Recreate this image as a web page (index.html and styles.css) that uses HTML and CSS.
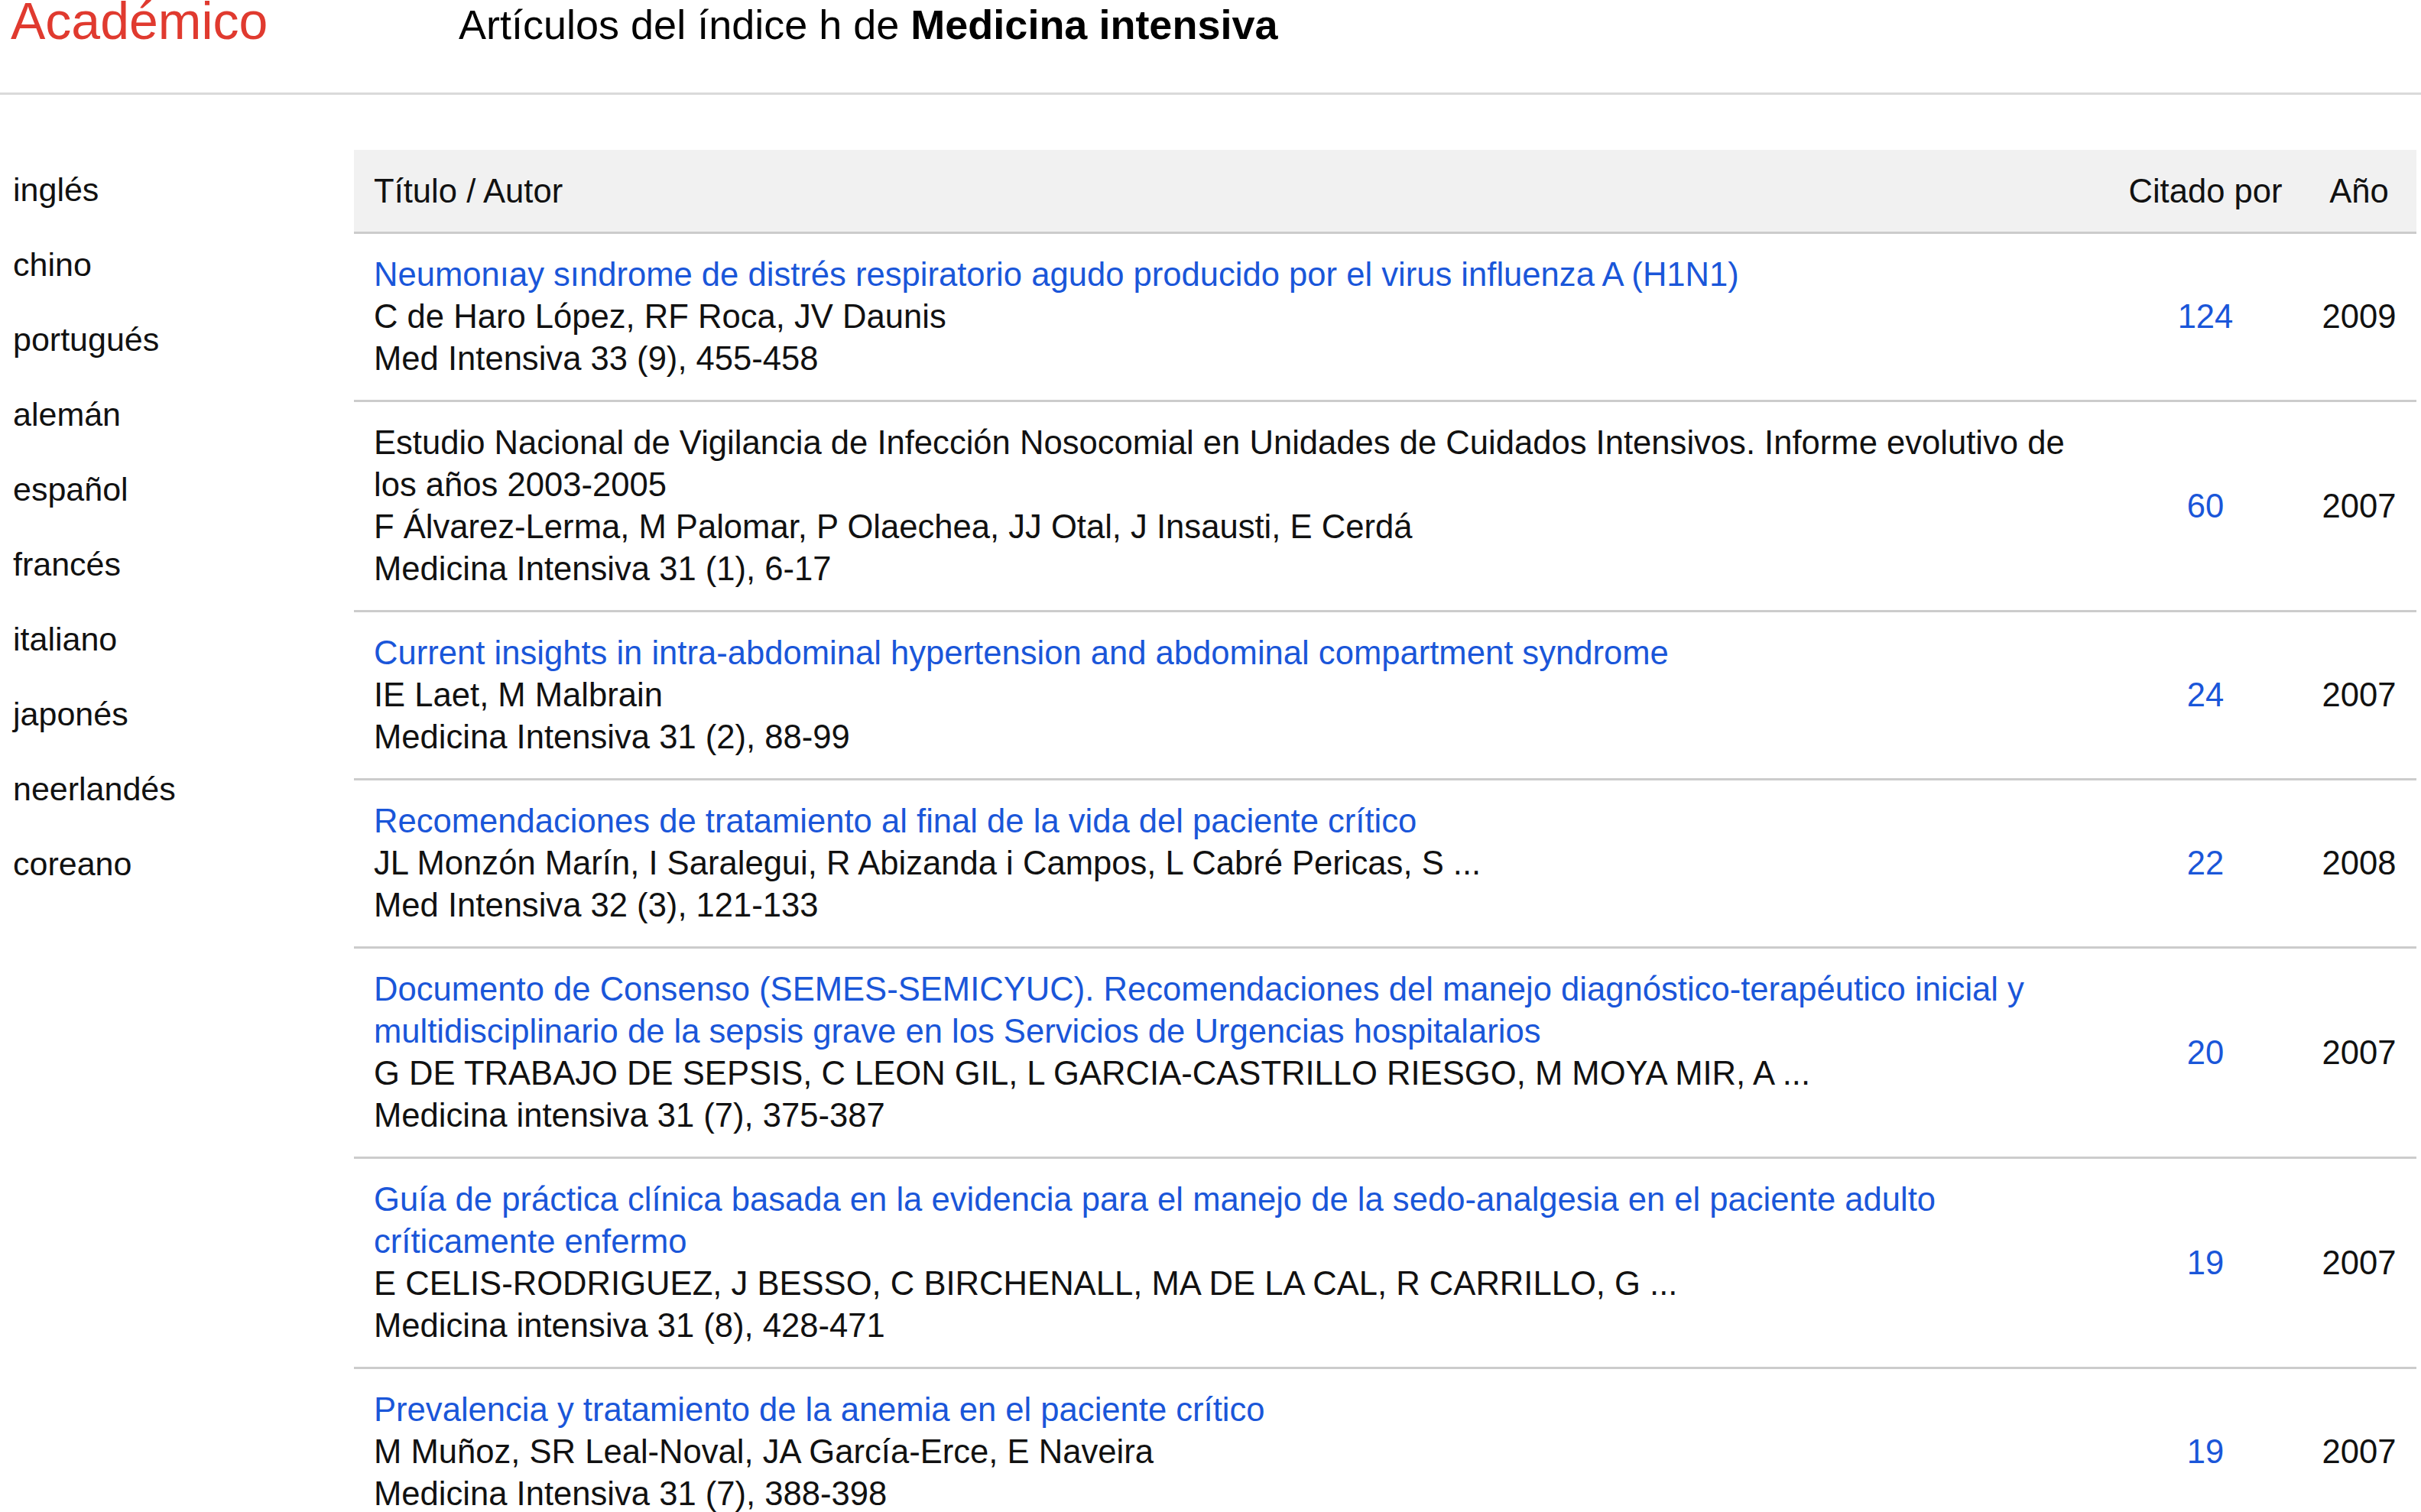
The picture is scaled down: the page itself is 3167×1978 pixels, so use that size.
FILE: index.html
```html
<!DOCTYPE html>
<html lang="es">
<head>
<meta charset="utf-8">
<title>Artículos del índice h de Medicina intensiva</title>
<link rel="stylesheet" href="styles.css">
</head>
<body>
<header class="topbar">
  <div class="brand">Académico</div>
  <h1 class="page-title">Artículos del índice h de <b>Medicina intensiva</b></h1>
</header>
<div class="main">
  <nav class="langs">
    <a class="lang">inglés</a>
    <a class="lang">chino</a>
    <a class="lang">portugués</a>
    <a class="lang">alemán</a>
    <a class="lang">español</a>
    <a class="lang">francés</a>
    <a class="lang">italiano</a>
    <a class="lang">japonés</a>
    <a class="lang">neerlandés</a>
    <a class="lang">coreano</a>
  </nav>
  <table class="results">
    <colgroup>
      <col class="c-title">
      <col class="c-cites">
      <col class="c-year">
    </colgroup>
    <thead>
      <tr>
        <th class="col-title">Título / Autor</th>
        <th class="col-cites">Citado por</th>
        <th class="col-year">Año</th>
      </tr>
    </thead>
    <tbody>
      <tr>
        <td class="col-title">
          <a class="t-link">Neumonıay sındrome de distrés respiratorio agudo producido por el virus influenza A (H1N1)</a>
          <div class="meta">C de Haro López, RF Roca, JV Daunis</div>
          <div class="meta">Med Intensiva 33 (9), 455-458</div>
        </td>
        <td class="col-cites"><a class="cites">124</a></td>
        <td class="col-year">2009</td>
      </tr>
      <tr>
        <td class="col-title">
          <span class="t-plain">Estudio Nacional de Vigilancia de Infección Nosocomial en Unidades de Cuidados Intensivos. Informe evolutivo de los años 2003-2005</span>
          <div class="meta">F Álvarez-Lerma, M Palomar, P Olaechea, JJ Otal, J Insausti, E Cerdá</div>
          <div class="meta">Medicina Intensiva 31 (1), 6-17</div>
        </td>
        <td class="col-cites"><a class="cites">60</a></td>
        <td class="col-year">2007</td>
      </tr>
      <tr>
        <td class="col-title">
          <a class="t-link">Current insights in intra-abdominal hypertension and abdominal compartment syndrome</a>
          <div class="meta">IE Laet, M Malbrain</div>
          <div class="meta">Medicina Intensiva 31 (2), 88-99</div>
        </td>
        <td class="col-cites"><a class="cites">24</a></td>
        <td class="col-year">2007</td>
      </tr>
      <tr>
        <td class="col-title">
          <a class="t-link">Recomendaciones de tratamiento al final de la vida del paciente crítico</a>
          <div class="meta">JL Monzón Marín, I Saralegui, R Abizanda i Campos, L Cabré Pericas, S ...</div>
          <div class="meta">Med Intensiva 32 (3), 121-133</div>
        </td>
        <td class="col-cites"><a class="cites">22</a></td>
        <td class="col-year">2008</td>
      </tr>
      <tr>
        <td class="col-title">
          <a class="t-link">Documento de Consenso (SEMES-SEMICYUC). Recomendaciones del manejo diagnóstico-terapéutico inicial y multidisciplinario de la sepsis grave en los Servicios de Urgencias hospitalarios</a>
          <div class="meta">G DE TRABAJO DE SEPSIS, C LEON GIL, L GARCIA-CASTRILLO RIESGO, M MOYA MIR, A ...</div>
          <div class="meta">Medicina intensiva 31 (7), 375-387</div>
        </td>
        <td class="col-cites"><a class="cites">20</a></td>
        <td class="col-year">2007</td>
      </tr>
      <tr>
        <td class="col-title">
          <a class="t-link">Guía de práctica clínica basada en la evidencia para el manejo de la sedo-analgesia en el paciente adulto críticamente enfermo</a>
          <div class="meta">E CELIS-RODRIGUEZ, J BESSO, C BIRCHENALL, MA DE LA CAL, R CARRILLO, G ...</div>
          <div class="meta">Medicina intensiva 31 (8), 428-471</div>
        </td>
        <td class="col-cites"><a class="cites">19</a></td>
        <td class="col-year">2007</td>
      </tr>
      <tr>
        <td class="col-title">
          <a class="t-link">Prevalencia y tratamiento de la anemia en el paciente crítico</a>
          <div class="meta">M Muñoz, SR Leal-Noval, JA García-Erce, E Naveira</div>
          <div class="meta">Medicina Intensiva 31 (7), 388-398</div>
        </td>
        <td class="col-cites"><a class="cites">19</a></td>
        <td class="col-year">2007</td>
      </tr>
    </tbody>
  </table>
</div>
</body>
</html>
```

FILE: styles.css
```css
html, body {
  margin: 0;
  padding: 0;
  background: #ffffff;
}

body {
  font-family: "Liberation Sans", Arial, sans-serif;
  color: #111111;
  font-size: 43px;
}

.topbar {
  display: flex;
  align-items: baseline;
  height: 121px;
  padding-left: 14px;
  border-bottom: 3px solid #dadada;
}

.brand {
  width: 586px;
  flex: 0 0 auto;
  font-size: 68px;
  line-height: 54px;
  color: #e03a2f;
}

.page-title {
  margin: 0;
  font-size: 54px;
  line-height: 54px;
  font-weight: normal;
  color: #000000;
}

.page-title b {
  font-weight: bold;
}

.main {
  display: flex;
  align-items: flex-start;
  padding-top: 72px;
}

.langs {
  flex: 0 0 463px;
  box-sizing: border-box;
  padding-left: 17px;
  padding-top: 3px;
}

.lang {
  display: block;
  line-height: 98px;
  color: #111111;
}

.results {
  width: 2698px;
  flex: 0 0 2698px;
  table-layout: fixed;
  border-collapse: separate;
  border-spacing: 0;
  font-size: 43.6px;
}

.c-title { width: 2296px; }
.c-cites { width: 252px; }
.c-year { width: 150px; }

.results th {
  height: 107px;
  padding: 0;
  background: #f1f1f1;
  border-bottom: 3px solid #cccccc;
  font-weight: normal;
  line-height: 54px;
  vertical-align: middle;
  color: #111111;
}

.results th.col-title {
  text-align: left;
  padding-left: 26px;
}

.results td {
  padding: 26px 0;
  border-bottom: 3px solid #cccccc;
  line-height: 55px;
  vertical-align: middle;
}

.results td.col-title {
  padding-left: 26px;
  padding-right: 26px;
}

.col-cites,
.col-year {
  text-align: center;
}

.t-link,
.cites {
  color: #1a56d9;
  text-decoration: none;
}

.t-plain {
  color: #111111;
}

.meta {
  color: #111111;
}
```
